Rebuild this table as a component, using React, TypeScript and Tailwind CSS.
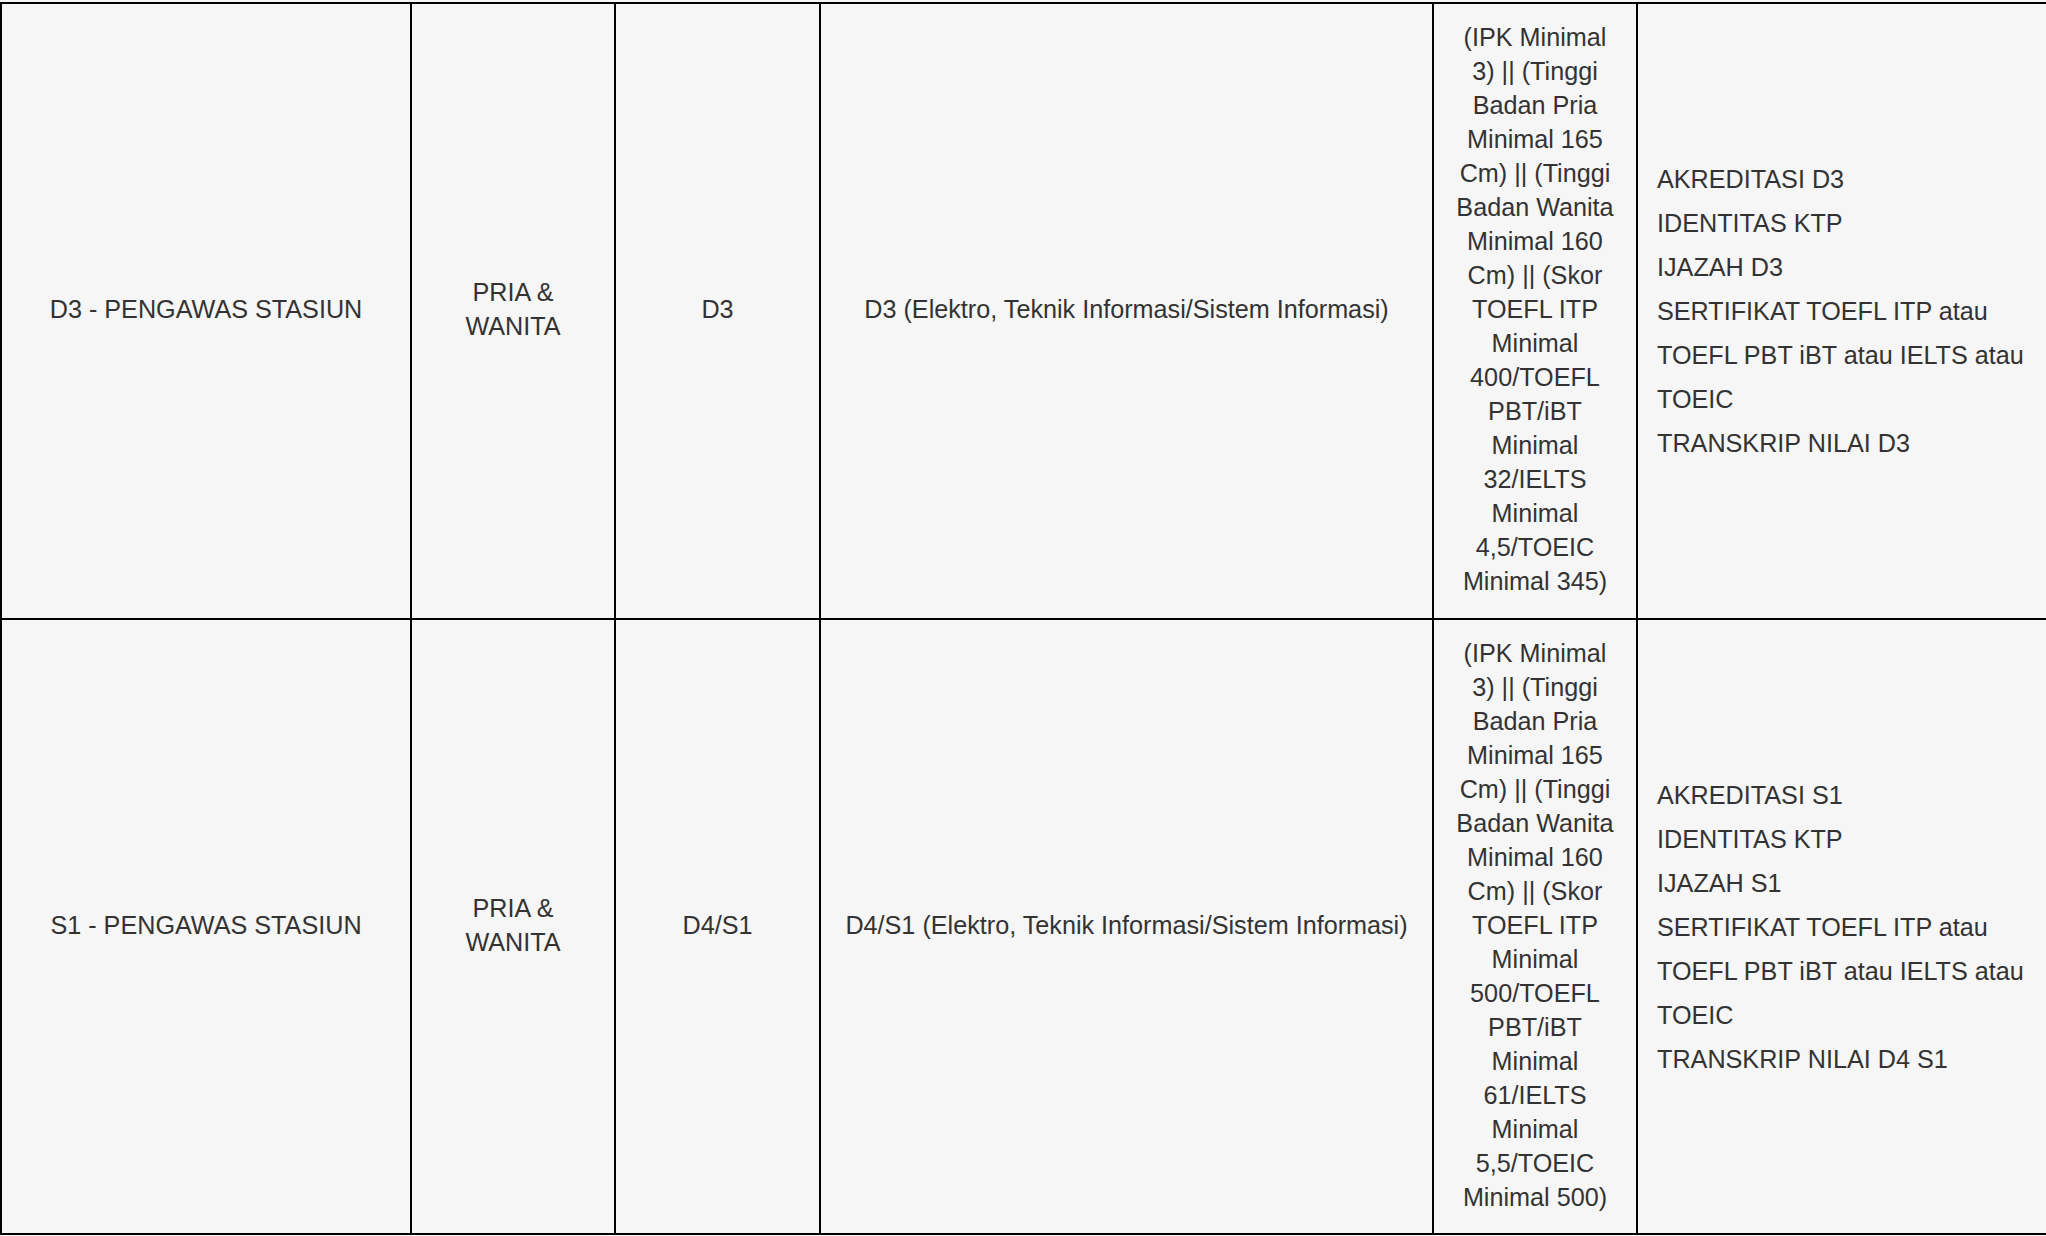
const rows = [
  {
    posisi: "D3 - PENGAWAS STASIUN",
    gender: ["PRIA &", "WANITA"],
    jenjang: "D3",
    jurusan: "D3 (Elektro, Teknik Informasi/Sistem Informasi)",
    syarat: [
      "(IPK Minimal",
      "3) || (Tinggi",
      "Badan Pria",
      "Minimal 165",
      "Cm) || (Tinggi",
      "Badan Wanita",
      "Minimal 160",
      "Cm) || (Skor",
      "TOEFL ITP",
      "Minimal",
      "400/TOEFL",
      "PBT/iBT",
      "Minimal",
      "32/IELTS",
      "Minimal",
      "4,5/TOEIC",
      "Minimal 345)",
    ],
    dokumen: [
      "AKREDITASI D3",
      "IDENTITAS KTP",
      "IJAZAH D3",
      "SERTIFIKAT TOEFL ITP atau",
      "TOEFL PBT iBT atau IELTS atau",
      "TOEIC",
      "TRANSKRIP NILAI D3",
    ],
  },
  {
    posisi: "S1 - PENGAWAS STASIUN",
    gender: ["PRIA &", "WANITA"],
    jenjang: "D4/S1",
    jurusan: "D4/S1 (Elektro, Teknik Informasi/Sistem Informasi)",
    syarat: [
      "(IPK Minimal",
      "3) || (Tinggi",
      "Badan Pria",
      "Minimal 165",
      "Cm) || (Tinggi",
      "Badan Wanita",
      "Minimal 160",
      "Cm) || (Skor",
      "TOEFL ITP",
      "Minimal",
      "500/TOEFL",
      "PBT/iBT",
      "Minimal",
      "61/IELTS",
      "Minimal",
      "5,5/TOEIC",
      "Minimal 500)",
    ],
    dokumen: [
      "AKREDITASI S1",
      "IDENTITAS KTP",
      "IJAZAH S1",
      "SERTIFIKAT TOEFL ITP atau",
      "TOEFL PBT iBT atau IELTS atau",
      "TOEIC",
      "TRANSKRIP NILAI D4 S1",
    ],
  },
];

const cell = "bg-[#f6f6f6] flex items-center justify-center text-center px-[19px] pt-[16px]";

export default function App() {
  return (
    <div
      className="min-h-screen w-full overflow-hidden bg-[#f6f6f6] pt-[2px] text-[#333333] text-[25.2px] leading-[34px]"
      style={{ fontFamily: '"Liberation Sans", Arial, Helvetica, sans-serif' }}
    >
      <div className="grid w-[2048px] grid-cols-[408px_202px_203px_611px_202px_408px] gap-[2px] bg-black p-[2px]">
        {rows.map((r, ri) => {
          const pb = ri === 0 ? "pb-[20px]" : "pb-[19px]";
          return (
            <div key={r.posisi} className="contents">
              <div className={`${cell} ${pb}`}>
                <span className="whitespace-nowrap">{r.posisi}</span>
              </div>
              <div className={`${cell} ${pb}`}>
                <div>
                  {r.gender.map((g) => (
                    <div key={g}>{g}</div>
                  ))}
                </div>
              </div>
              <div className={`${cell} ${pb}`}>{r.jenjang}</div>
              <div className={`${cell} ${pb}`}>
                <span className="whitespace-nowrap">{r.jurusan}</span>
              </div>
              <div className={`${cell} ${pb}`}>
                <div>
                  {r.syarat.map((s, i) => (
                    <div key={i} className="whitespace-nowrap">{s}</div>
                  ))}
                </div>
              </div>
              <div className="bg-[#f6f6f6] flex flex-col justify-center px-[19px] leading-[44px]">
                {r.dokumen.map((d) => (
                  <div key={d} className="whitespace-nowrap">{d}</div>
                ))}
              </div>
            </div>
          );
        })}
      </div>
    </div>
  );
}
